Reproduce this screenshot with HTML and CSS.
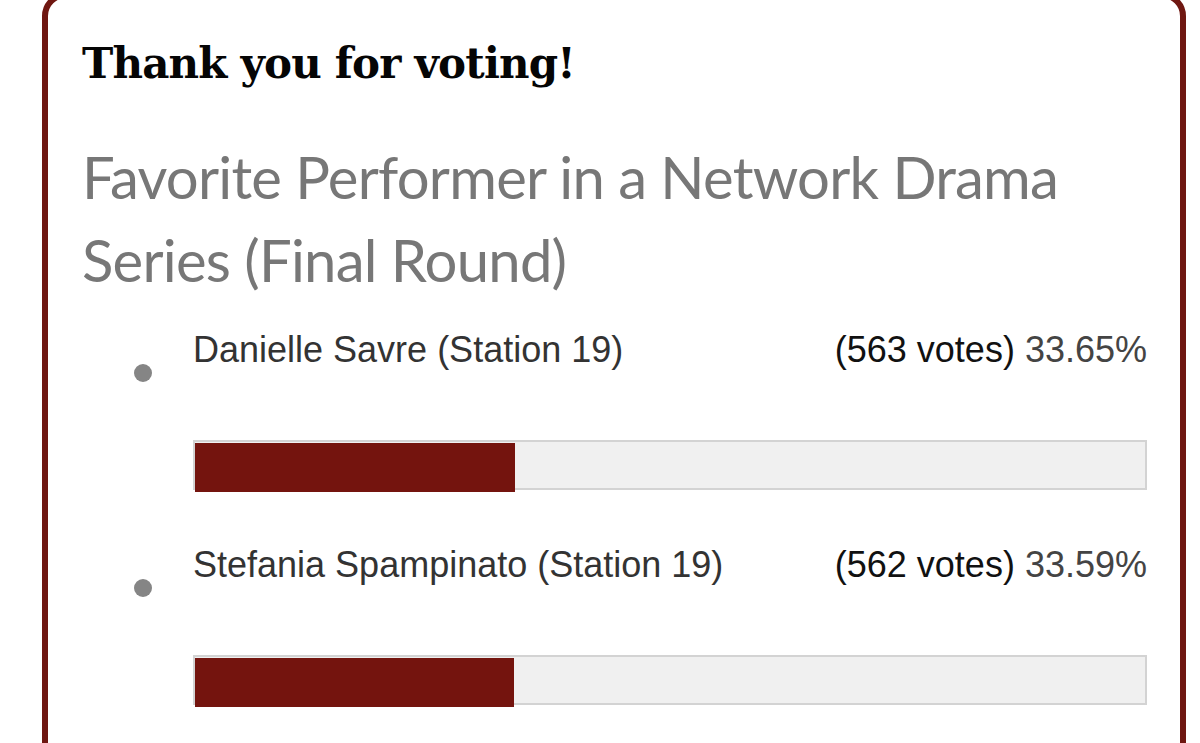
FILE: index.html
```html
<!DOCTYPE html>
<html>
<head>
<meta charset="utf-8">
<title>Poll results</title>
<link rel="stylesheet" href="styles.css">
</head>
<body>
<div class="card">
  <h1 class="thanks">Thank you for voting!</h1>
  <h2 class="question">Favorite Performer in a Network Drama Series (Final Round)</h2>
  <ul class="answers">
    <li class="answer">
      <span class="bullet"></span>
      <div class="answer-body">
        <div class="answer-row">
          <span class="answer-name">Danielle Savre (Station 19)</span>
          <span class="answer-stats"><span class="votes">(563 votes)</span> <span class="pct">33.65%</span></span>
        </div>
        <div class="bar"><div class="bar-fill" style="width:33.65%"></div></div>
      </div>
    </li>
    <li class="answer">
      <span class="bullet"></span>
      <div class="answer-body">
        <div class="answer-row">
          <span class="answer-name">Stefania Spampinato (Station 19)</span>
          <span class="answer-stats"><span class="votes">(562 votes)</span> <span class="pct">33.59%</span></span>
        </div>
        <div class="bar"><div class="bar-fill" style="width:33.59%"></div></div>
      </div>
    </li>
  </ul>
</div>
</body>
</html>
```
FILE: styles.css
```css
html, body {
  margin: 0;
  padding: 0;
  background: #ffffff;
}

body {
  overflow: hidden;
}

.card {
  box-sizing: border-box;
  width: 1144px;
  min-height: 820px;
  margin: -8px 0 0 42px;
  padding: 41px 33px 0 34px;
  border: 6px solid #6f1711;
  border-radius: 24px;
  background: #ffffff;
}

.thanks {
  margin: 0;
  font-family: "DejaVu Serif", Georgia, serif;
  font-weight: bold;
  font-size: 42px;
  letter-spacing: -0.8px;
  line-height: 50px;
  color: #050505;
}

.question {
  margin: 46px 0 0 0;
  font-family: Lato, "Open Sans", sans-serif;
  font-weight: normal;
  font-size: 58px;
  letter-spacing: -0.75px;
  line-height: 83px;
  color: #777777;
}

.answers {
  list-style: none;
  margin: 28px 0 0 0;
  padding: 0;
}

.answer {
  display: flex;
  align-items: flex-start;
  height: 215px;
}

.bullet {
  flex: none;
  width: 18px;
  height: 18px;
  margin: 35px 0 0 52px;
  border-radius: 50%;
  background: #858585;
}

.answer-body {
  flex: 1;
  margin-left: 41px;
}

.answer-row {
  display: flex;
  justify-content: space-between;
  font-family: "Liberation Sans", Arial, sans-serif;
  font-size: 36px;
  line-height: 42px;
  white-space: nowrap;
}

.answer-name {
  color: #333333;
}

.votes {
  color: #111111;
}

.pct {
  color: #444444;
}

.bar {
  box-sizing: border-box;
  height: 50px;
  margin-top: 69px;
  border: 2px solid #d3d3d3;
  background: #f0f0f0;
}

.bar-fill {
  height: 49px;
  margin-top: 1px;
  background: #74140e;
}
```
